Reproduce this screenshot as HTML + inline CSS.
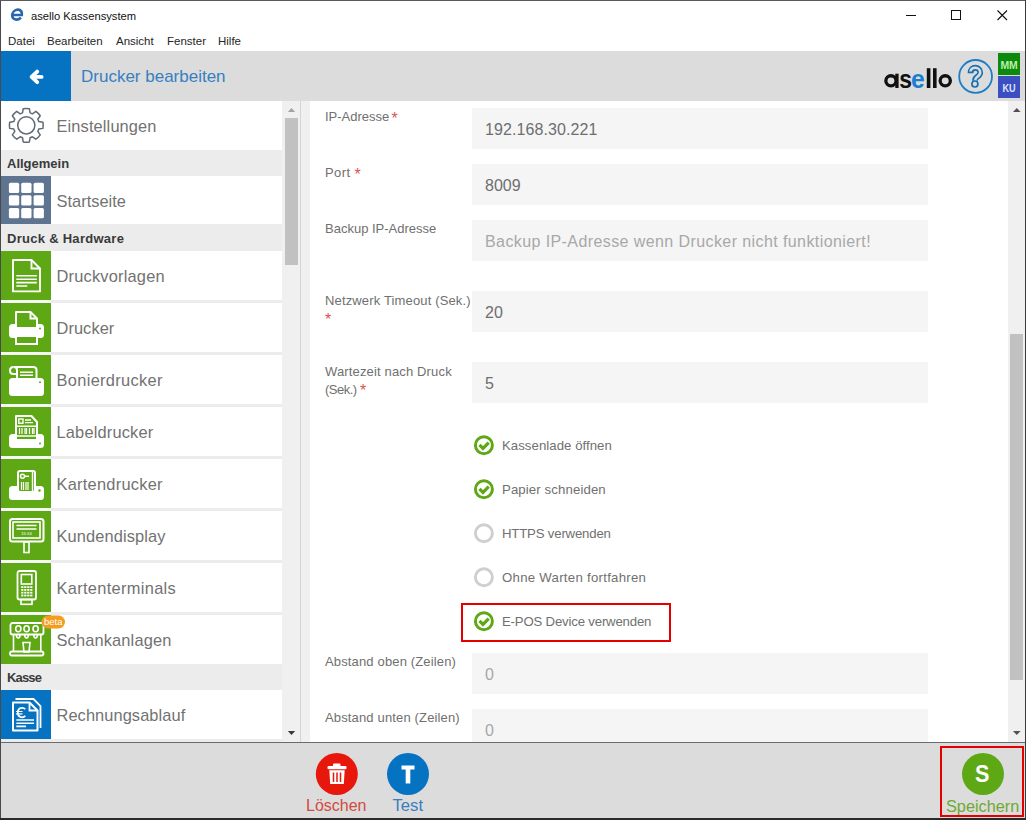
<!DOCTYPE html>
<html><head><meta charset="utf-8">
<style>
*{box-sizing:border-box;margin:0;padding:0}
html,body{width:1026px;height:820px;overflow:hidden;background:#fff;font-family:"Liberation Sans",sans-serif}
.a{position:absolute}
.t{position:absolute;white-space:nowrap;line-height:1}
#frameL{left:0;top:0;width:1px;height:820px;background:#4a4a4a}
#frameT{left:0;top:0;width:1026px;height:1px;background:#5a5a5a}
#frameR{left:1025px;top:0;width:1px;height:820px;background:#3a3a3a}
#frameB{left:0;top:818px;width:1026px;height:2px;background:#2a2a2a}
.menu{font-size:11.5px;color:#262626;top:35.7px}
#hdr{left:1px;top:51px;width:1024px;height:50px;background:#dcdcdc}
#back{left:1px;top:51px;width:70px;height:50px;background:#0572c2}
.side-row{position:absolute;left:1px;width:281px;height:49px;background:#fff}
.ibox{position:absolute;left:0;top:0;width:50px;height:49px}
.green{background:#5ea816}
.lbl{position:absolute;left:56.5px;font-size:16.4px;color:#727272;white-space:nowrap;line-height:1}
.sec{position:absolute;left:1px;width:281px;height:26px;background:#ececec}
.sec span{position:absolute;left:6px;top:7px;font-size:13px;font-weight:bold;color:#3a3a3a;white-space:nowrap;line-height:1}
.flbl{position:absolute;left:325px;font-size:13px;color:#707070;line-height:18px;white-space:nowrap}
.ast{color:#d9534f;font-size:16px;line-height:0;position:relative;top:2.2px}
.inp{position:absolute;left:472px;width:456px;height:41px;background:#f5f5f5}
.inp span{position:absolute;left:13px;top:13.8px;font-size:16px;color:#6e6e6e;line-height:1;white-space:nowrap}
.inp span.ph{color:#a8a8a8}
.cb{position:absolute;left:473px;width:21px;height:21px;border-radius:50%;border:2.5px solid #5ea816}
.cb.off{border-color:#cfcfcf}
.cbl{position:absolute;left:502px;font-size:13.2px;color:#707070;line-height:1;white-space:nowrap}
</style></head><body>
<!-- title bar -->
<div class="a" style="left:1px;top:1px;width:1024px;height:50px;background:#fff"></div>
<svg class="a" style="left:9px;top:6px" width="18" height="18" viewBox="0 0 18 18">
  <path d="M3.4,9 H12.8 C12.9,6 10.9,3.6 8.1,3.6 C5.3,3.6 3.1,5.8 3.1,8.6 C3.1,11.4 5.3,13.6 8.1,13.6 C9.9,13.6 11.3,12.9 12.3,11.6" fill="none" stroke="#2a66ad" stroke-width="2.6" transform="skewX(-8) translate(1.3,0)"/>
</svg>
<div class="t" style="left:31px;top:11px;font-size:11.2px;color:#111">asello Kassensystem</div>
<svg class="a" style="left:900px;top:5px" width="120" height="22">
  <line x1="906" y1="15.5" x2="916" y2="15.5" stroke="#111" stroke-width="1" transform="translate(-900,-5)"/>
  <rect x="51.5" y="5.5" width="9" height="9" fill="none" stroke="#111" stroke-width="1"/>
  <path d="M97.5,5.5 L107,15 M107,5.5 L97.5,15" stroke="#111" stroke-width="1.1"/>
</svg>
<div class="t menu" style="left:8px">Datei</div>
<div class="t menu" style="left:47px">Bearbeiten</div>
<div class="t menu" style="left:116px">Ansicht</div>
<div class="t menu" style="left:167px">Fenster</div>
<div class="t menu" style="left:218px">Hilfe</div>

<!-- header -->
<div id="hdr" class="a"></div>
<div id="back" class="a"></div>
<svg class="a" style="left:20px;top:60px" width="32" height="32" viewBox="20 60 32 32">
  <path d="M37.2,71.6 L31.6,76.9 L37.2,82.2 M32.5,76.9 H41.6" fill="none" stroke="#fff" stroke-width="3.9" stroke-linecap="round" stroke-linejoin="round"/>
</svg>
<div class="t" style="left:81px;top:68px;font-size:17px;color:#3580c0">Drucker bearbeiten</div>

<!-- sidebar -->
<div class="a" style="left:1px;top:101px;width:281px;height:641px;background:#ececec"></div>
<!-- Einstellungen -->
<div class="side-row" style="top:101px;height:49px"></div>
<svg class="a" style="left:0;top:101px" width="52" height="49" viewBox="0 101 52 49">
  <g transform="translate(26.3,125.3)" fill="none" stroke="#606b74" stroke-width="1.5" stroke-linejoin="round">
    <path d="M-3.80,-12.43 L-3.08,-16.62 A16.9,16.9 0 0 1 3.08,-16.62 L3.80,-12.43 A13.0,13.0 0 0 1 6.10,-11.48 L9.57,-13.93 A16.9,16.9 0 0 1 13.93,-9.57 L11.48,-6.10 A13.0,13.0 0 0 1 12.43,-3.80 L16.62,-3.08 A16.9,16.9 0 0 1 16.62,3.08 L12.43,3.80 A13.0,13.0 0 0 1 11.48,6.10 L13.93,9.57 A16.9,16.9 0 0 1 9.57,13.93 L6.10,11.48 A13.0,13.0 0 0 1 3.80,12.43 L3.08,16.62 A16.9,16.9 0 0 1 -3.08,16.62 L-3.80,12.43 A13.0,13.0 0 0 1 -6.10,11.48 L-9.57,13.93 A16.9,16.9 0 0 1 -13.93,9.57 L-11.48,6.10 A13.0,13.0 0 0 1 -12.43,3.80 L-16.62,3.08 A16.9,16.9 0 0 1 -16.62,-3.08 L-12.43,-3.80 A13.0,13.0 0 0 1 -11.48,-6.10 L-13.93,-9.57 A16.9,16.9 0 0 1 -9.57,-13.93 L-6.10,-11.48 A13.0,13.0 0 0 1 -3.80,-12.43 Z"/>
    <circle r="8.6"/>
  </g>
</svg>
<div class="lbl" style="top:118px;letter-spacing:0.13px">Einstellungen</div>
<div class="sec" style="top:150px"><span>Allgemein</span></div>
<!-- Startseite -->
<div class="side-row" style="top:176px;height:48px"></div>
<div class="a" style="left:1px;top:176px;width:50px;height:48px;background:#5e7491"></div>
<svg class="a" style="left:0;top:176px" width="52" height="48" viewBox="0 176 52 48" fill="#fff">
  <rect x="8.9" y="182.7" width="10.3" height="10.3" rx="1.5"/><rect x="21.2" y="182.7" width="10.3" height="10.3" rx="1.5"/><rect x="33.6" y="182.7" width="10.3" height="10.3" rx="1.5"/>
  <rect x="8.9" y="195.3" width="10.3" height="10.3" rx="1.5"/><rect x="21.2" y="195.3" width="10.3" height="10.3" rx="1.5"/><rect x="33.6" y="195.3" width="10.3" height="10.3" rx="1.5"/>
  <rect x="8.9" y="207.9" width="10.3" height="10.3" rx="1.5"/><rect x="21.2" y="207.9" width="10.3" height="10.3" rx="1.5"/><rect x="33.6" y="207.9" width="10.3" height="10.3" rx="1.5"/>
</svg>
<div class="lbl" style="top:192.5px;letter-spacing:0.02px">Startseite</div>
<div class="sec" style="top:224px;height:27px"><span style="top:8px;letter-spacing:0.28px">Druck &amp; Hardware</span></div>

<!-- Druckvorlagen 251 -->
<div class="side-row" style="top:251px"></div>
<div class="a green" style="left:1px;top:251px;width:50px;height:49px"></div>
<svg class="a" style="left:0;top:251px" width="52" height="49" viewBox="0 0 52 49" fill="none" stroke="#fff" stroke-width="2">
  <path d="M13,9 H31.5 L40,17.5 V40.4 H13 Z" stroke-linejoin="round" stroke-width="1.9"/>
  <path d="M31.5,9 V17.5 H40" stroke-width="1.9"/>
  <path d="M16.3,24.8 H36.8 M16.3,28.2 H36.8 M16.3,31.6 H36.8 M16.3,35 H27.3" stroke-width="1.6"/>
</svg>
<div class="lbl" style="top:267.5px;letter-spacing:0.2px">Druckvorlagen</div>

<!-- Drucker 303 -->
<div class="side-row" style="top:303px"></div>
<div class="a green" style="left:1px;top:303px;width:50px;height:49px"></div>
<svg class="a" style="left:0;top:303px" width="52" height="49" viewBox="0 0 52 49">
  <rect x="9" y="21" width="35" height="14" rx="3.5" fill="#fff"/>
  <path d="M16,9 H30.5 L37,15.5 V25 H16 Z" fill="#5ea816" stroke="#fff" stroke-width="2" stroke-linejoin="round"/>
  <path d="M30.5,9 V15.5 H37" fill="none" stroke="#fff" stroke-width="2"/>
  <rect x="16" y="33" width="21" height="8" fill="#5ea816" stroke="#fff" stroke-width="2"/>
  <circle cx="40" cy="25.6" r="1" fill="#5ea816"/>
</svg>
<div class="lbl" style="top:319.5px;letter-spacing:0.07px">Drucker</div>

<!-- Bonierdrucker 355 -->
<div class="side-row" style="top:355px"></div>
<div class="a green" style="left:1px;top:355px;width:50px;height:49px"></div>
<svg class="a" style="left:0;top:355px" width="52" height="49" viewBox="0 0 52 49">
  <rect x="9" y="23" width="35" height="18" rx="3.5" fill="#fff"/>
  <path d="M17,24 V15 C17,12.5 15.5,12 13.5,12 H33 C35,12 36.5,13 36.5,15 V24" fill="none" stroke="#fff" stroke-width="2"/>
  <path d="M13.5,12 C11,12 10,13.5 10,15.5 C10,18 11.5,19 13.5,19 H17" fill="none" stroke="#fff" stroke-width="2"/>
  <path d="M20,17.2 H33 M20,20.2 H33" stroke="#fff" stroke-width="1.6"/>
  <circle cx="40" cy="27.3" r="1" fill="#5ea816"/>
</svg>
<div class="lbl" style="top:371.5px;letter-spacing:0.33px">Bonierdrucker</div>

<!-- Labeldrucker 407 -->
<div class="side-row" style="top:407px"></div>
<div class="a green" style="left:1px;top:407px;width:50px;height:49px"></div>
<svg class="a" style="left:0;top:407px" width="52" height="49" viewBox="0 0 52 49">
  <rect x="9" y="27" width="35" height="14" rx="3.5" fill="#fff"/>
  <path d="M16,9 H31.5 L37,15 V33 H16 Z" fill="#5ea816" stroke="#fff" stroke-width="2" stroke-linejoin="round"/>
  <rect x="18.8" y="12" width="4.2" height="4.2" fill="none" stroke="#fff" stroke-width="1.4"/>
  <path d="M25,13 H31 M25,15.6 H33" stroke="#fff" stroke-width="1.3"/>
  <path d="M17,19.3 H36 M17,29 H36" stroke="#fff" stroke-width="1.5"/>
  <path d="M19.5,21 V27 M22,21 V27 M25,21 V27 M26.5,21 V27 M29.5,21 V27 M32.5,21 V27 M34,21 V27" stroke="#fff" stroke-width="1.2"/>
  <circle cx="40" cy="36.5" r="1" fill="#5ea816"/>
</svg>
<div class="lbl" style="top:423.5px;letter-spacing:0.18px">Labeldrucker</div>

<!-- Kartendrucker 459 -->
<div class="side-row" style="top:459px"></div>
<div class="a green" style="left:1px;top:459px;width:50px;height:49px"></div>
<svg class="a" style="left:0;top:459px" width="52" height="49" viewBox="0 0 52 49">
  <rect x="9" y="27" width="35" height="14" rx="3.5" fill="#fff"/>
  <rect x="18" y="12" width="17" height="21" rx="2" fill="#5ea816" stroke="#fff" stroke-width="2"/>
  <path d="M32.5,13 V32" stroke="#fff" stroke-width="1.4"/>
  <circle cx="22.5" cy="17.3" r="2" fill="none" stroke="#fff" stroke-width="1.5"/>
  <path d="M24.5,17.3 H29" stroke="#fff" stroke-width="1.5"/>
  <path d="M21.5,23 V31 M23.5,23 V31 M26,23 V31 M28,23 V31" stroke="#fff" stroke-width="1.2"/>
  <circle cx="39.5" cy="31.5" r="1.2" fill="#5ea816"/>
</svg>
<div class="lbl" style="top:475.5px;letter-spacing:0.26px">Kartendrucker</div>

<!-- Kundendisplay 511 -->
<div class="side-row" style="top:511px"></div>
<div class="a green" style="left:1px;top:511px;width:50px;height:49px"></div>
<svg class="a" style="left:0;top:511px" width="52" height="49" viewBox="0 0 52 49">
  <rect x="10" y="8" width="33.5" height="22.5" rx="2.5" fill="none" stroke="#fff" stroke-width="2"/>
  <rect x="13" y="11" width="27" height="16" fill="none" stroke="#fff" stroke-width="1.6"/>
  <path d="M16.5,14.5 H36.5 M16.5,18 H36.5" stroke="#fff" stroke-width="1.3"/>
  <text x="26.5" y="23.8" font-family="Liberation Sans" font-size="4.2" fill="#fff" text-anchor="middle">15:34</text>
  <rect x="24" y="31" width="5" height="10.5" fill="none" stroke="#fff" stroke-width="1.6"/>
</svg>
<div class="lbl" style="top:527.5px;letter-spacing:0.12px">Kundendisplay</div>

<!-- Kartenterminals 563 -->
<div class="side-row" style="top:563px"></div>
<div class="a green" style="left:1px;top:563px;width:50px;height:49px"></div>
<svg class="a" style="left:0;top:563px" width="52" height="49" viewBox="0 0 52 49">
  <rect x="17.5" y="8" width="18.5" height="28.5" rx="2" fill="none" stroke="#fff" stroke-width="1.8"/>
  <rect x="21.3" y="11.5" width="10.5" height="9.5" fill="none" stroke="#fff" stroke-width="1.6"/>
  <rect x="21" y="36.5" width="11" height="4.8" fill="none" stroke="#fff" stroke-width="1.6"/>
  <g fill="#fff">
    <rect x="21.2" y="23.2" width="2.2" height="1.8"/><rect x="24.2" y="23.2" width="2.2" height="1.8"/><rect x="27.2" y="23.2" width="2.2" height="1.8"/><rect x="30.2" y="23.2" width="2.2" height="1.8"/>
    <rect x="21.2" y="26" width="2.2" height="1.8"/><rect x="24.2" y="26" width="2.2" height="1.8"/><rect x="27.2" y="26" width="2.2" height="1.8"/><rect x="30.2" y="26" width="2.2" height="1.8"/>
    <rect x="21.2" y="28.8" width="2.2" height="1.8"/><rect x="24.2" y="28.8" width="2.2" height="1.8"/><rect x="27.2" y="28.8" width="2.2" height="1.8"/><rect x="30.2" y="28.8" width="2.2" height="1.8"/>
    <rect x="21.2" y="31.6" width="2.2" height="1.8"/><rect x="24.2" y="31.6" width="2.2" height="1.8"/><rect x="27.2" y="31.6" width="2.2" height="1.8"/><rect x="30.2" y="31.6" width="2.2" height="1.8"/>
  </g>
</svg>
<div class="lbl" style="top:579.5px;letter-spacing:0.32px">Kartenterminals</div>

<!-- Schankanlagen 615 -->
<div class="side-row" style="top:615px"></div>
<div class="a green" style="left:1px;top:615px;width:50px;height:49px"></div>
<svg class="a" style="left:0;top:615px" width="70" height="49" viewBox="0 0 70 49">
  <rect x="10.5" y="8" width="33" height="11.5" rx="2" fill="none" stroke="#fff" stroke-width="1.8"/>
  <g fill="none" stroke="#fff" stroke-width="1.6">
    <ellipse cx="18.3" cy="13.8" rx="2.6" ry="3"/><ellipse cx="26.6" cy="13.8" rx="2.6" ry="3"/><ellipse cx="35.6" cy="13.8" rx="2.6" ry="3"/>
    <path d="M13.5,19.5 V36.5 M40.8,19.5 V36.5"/>
    <path d="M16.5,20 C16.5,24 20,24 20,20 M24.8,20 C24.8,24 28.3,24 28.3,20 M33.8,20 C33.8,24 37.3,24 37.3,20"/>
    <path d="M23,27.5 H30 L29,37 H24 Z"/>
  </g>
  <rect x="10" y="36.5" width="33.5" height="4" rx="2" fill="none" stroke="#fff" stroke-width="1.8"/>
  <rect x="41.5" y="0.5" width="23.5" height="13" rx="6.5" fill="#f39c1e"/>
  <text x="53.2" y="10.3" font-family="Liberation Sans" font-size="9.5" fill="#fff" text-anchor="middle">beta</text>
</svg>
<div class="lbl" style="top:631.5px;letter-spacing:0.15px">Schankanlagen</div>
<div class="sec" style="top:664px"><span style="letter-spacing:-0.85px">Kasse</span></div>

<!-- Rechnungsablauf 690 -->
<div class="side-row" style="top:690px"></div>
<div class="a" style="left:1px;top:690px;width:50px;height:49px;background:#0572c2"></div>
<svg class="a" style="left:0;top:690px" width="52" height="49" viewBox="0 0 52 49" fill="none" stroke="#fff">
  <path d="M15.5,9 H33.5 L40.5,16 V38" stroke-width="1.8"/>
  <path d="M13,12.5 H29.5 L37.5,20.5 V40.5 H13 Z" stroke-width="2" stroke-linejoin="round"/>
  <path d="M29.5,12.5 V20.5 H37.5" stroke-width="1.8"/>
  <path d="M25.3,19.3 C24.5,18.3 23.5,17.8 22.2,17.8 C19.3,17.8 17.8,20 17.8,22.6 C17.8,25.3 19.3,27.3 22.2,27.3 C23.5,27.3 24.5,26.8 25.3,25.8" stroke-width="1.8"/>
  <path d="M16,21.5 H22.5 M16,23.8 H22.5" stroke-width="1.2"/>
  <path d="M16.3,30 H34 M16.3,33.2 H34 M16.3,36.4 H26" stroke-width="1.6"/>
</svg>
<div class="lbl" style="top:706.5px;letter-spacing:0.08px">Rechnungsablauf</div>



<div class="a" style="left:1px;top:300px;width:50px;height:3px;background:#f6f6f6"></div><div class="a" style="left:1px;top:352px;width:50px;height:3px;background:#f6f6f6"></div><div class="a" style="left:1px;top:404px;width:50px;height:3px;background:#f6f6f6"></div><div class="a" style="left:1px;top:456px;width:50px;height:3px;background:#f6f6f6"></div><div class="a" style="left:1px;top:508px;width:50px;height:3px;background:#f6f6f6"></div><div class="a" style="left:1px;top:560px;width:50px;height:3px;background:#f6f6f6"></div><div class="a" style="left:1px;top:612px;width:50px;height:3px;background:#f6f6f6"></div>
<!-- sidebar scrollbar -->
<div class="a" style="left:282px;top:101px;width:18px;height:641px;background:#f0f0f0"></div>
<div class="a" style="left:285px;top:118px;width:13px;height:147px;background:#c1c1c1"></div>
<div class="a" style="left:300px;top:101px;width:1px;height:641px;background:#d4d4d4"></div>
<!-- sidebar scroll arrows -->
<svg class="a" style="left:282px;top:101px" width="18" height="641">
  <path d="M5.8,11 L9.5,7 L13.2,11 Z" fill="#a3a3a3"/>
  <path d="M5.8,630 L9.5,634 L13.2,630 Z" fill="#3a3a3a"/>
</svg>

<!-- content -->
<div class="a" style="left:301px;top:101px;width:9px;height:641px;background:#f0f0f0"></div>
<div class="a" style="left:310px;top:101px;width:698px;height:641px;background:#fff"></div>
<div class="flbl" style="top:108.4px">IP-Adresse <span class="ast" style="margin-left:-1.5px">*</span></div>
<div class="inp" style="top:108px"><span style="letter-spacing:0.1px">192.168.30.221</span></div>
<div class="flbl" style="top:164.4px;letter-spacing:0.4px">Port <span class="ast">*</span></div>
<div class="inp" style="top:164px"><span>8009</span></div>
<div class="flbl" style="top:220.4px">Backup IP-Adresse</div>
<div class="inp" style="top:220px"><span class="ph" style="letter-spacing:0.41px">Backup IP-Adresse wenn Drucker nicht funktioniert!</span></div>
<div class="flbl" style="top:292.1px;letter-spacing:0.15px">Netzwerk Timeout (Sek.)<br><span class="ast">*</span></div>
<div class="inp" style="top:291px"><span>20</span></div>
<div class="flbl" style="top:362.7px;letter-spacing:0.15px">Wartezeit nach Druck<br><span style="letter-spacing:-0.5px">(Sek.)</span> <span class="ast" style="margin-left:-0.5px">*</span></div>
<div class="inp" style="top:362px"><span>5</span></div>

<svg class="a" style="left:460px;top:420px" width="220" height="230" viewBox="460 420 220 230">
  <g fill="none" stroke-width="3">
    <circle cx="483.9" cy="445.2" r="8.5" stroke="#5ea816"/>
    <path d="M479.5,444.8 L483,448.3 L488.7,442.6" stroke="#5ea816" stroke-width="3.3"/>
    <circle cx="483.9" cy="489.2" r="8.5" stroke="#5ea816"/>
    <path d="M479.5,488.8 L483,492.3 L488.7,486.6" stroke="#5ea816" stroke-width="3.3"/>
    <circle cx="483.9" cy="533.2" r="8.5" stroke="#cfcfcf"/>
    <circle cx="483.9" cy="577.2" r="8.5" stroke="#cfcfcf"/>
    <circle cx="483.9" cy="621.2" r="8.5" stroke="#5ea816"/>
    <path d="M479.5,620.8 L483,624.3 L488.7,618.6" stroke="#5ea816" stroke-width="3.3"/>
  </g>
  <rect x="462" y="604" width="208" height="37" fill="none" stroke="#e50000" stroke-width="2"/>
</svg>
<div class="cbl" style="top:439.1px;letter-spacing:0.05px">Kassenlade öffnen</div>
<div class="cbl" style="top:483.1px;letter-spacing:0.12px">Papier schneiden</div>
<div class="cbl" style="top:527.1px;letter-spacing:-0.18px">HTTPS verwenden</div>
<div class="cbl" style="top:571.1px;letter-spacing:0.28px">Ohne Warten fortfahren</div>
<div class="cbl" style="top:615.1px;letter-spacing:-0.18px">E-POS Device verwenden</div>

<div class="flbl" style="top:653.1px;letter-spacing:0.15px">Abstand oben (Zeilen)</div>
<div class="inp" style="top:653px"><span class="ph">0</span></div>
<div class="flbl" style="top:709.1px;letter-spacing:0.15px">Abstand unten (Zeilen)</div>
<div class="inp" style="top:709px"><span class="ph">0</span></div>


<!-- content scrollbar -->
<div class="a" style="left:1008px;top:101px;width:17px;height:641px;background:#f0f0f0"></div>
<div class="a" style="left:1010px;top:334px;width:13px;height:346px;background:#c1c1c1"></div>

<svg class="a" style="left:870px;top:51px" width="155" height="50" viewBox="870 51 155 50">
  <g fill="none" stroke="#111" stroke-width="3.3">
    <circle cx="890.95" cy="80.85" r="5.1"/>
    <circle cx="945.25" cy="80.85" r="5.1"/>
  </g>
  <g fill="#111">
    <rect x="895.3" y="73.7" width="3.3" height="14.3"/>
    <rect x="926.8" y="68.2" width="3.6" height="19.8"/>
    <rect x="933" y="68.2" width="3.6" height="19.8"/>
  </g>
  <text x="0" y="0" font-family="Liberation Sans" font-weight="bold" font-size="26" fill="#111" transform="translate(899.3,88) scale(0.88,1)">s</text>
  <text x="0" y="0" font-family="Liberation Sans" font-weight="bold" font-size="26" fill="#1a7fd0" transform="translate(911,88) scale(0.95,1)">e</text>
  <circle cx="975.6" cy="76.4" r="16.4" fill="none" stroke="#1d7ec6" stroke-width="1.8"/>
  <path d="M970.5,73.2 C970.5,69.5 972.7,67.75 975.35,67.75 C978,67.75 980.2,69.8 980.2,72.4 C980.2,74.8 978.5,76 976.8,77.2 C975.5,78.1 975,79 975,80.8" fill="none" stroke="#1a6fb0" stroke-width="5.8"/>
  <path d="M970.5,71.6 C970.5,69.5 972.7,67.75 975.35,67.75 C978,67.75 980.2,69.8 980.2,72.4 C980.2,74.8 978.5,76 976.8,77.2 C975.5,78.1 975,79 975,81.5" fill="none" stroke="#d8dde2" stroke-width="2.6"/>
  <circle cx="974.9" cy="84" r="3" fill="#d8dde2" stroke="#1a6fb0" stroke-width="1.7"/>
  <rect x="998" y="53" width="22" height="22" fill="#0b8a0b"/>
  <rect x="998" y="76" width="22" height="22" fill="#3b4fc0"/>
  <text x="1000.4" y="69.2" font-family="Liberation Sans" font-weight="bold" font-size="10.4" fill="#b8f0a8" textLength="17.4" lengthAdjust="spacingAndGlyphs">MM</text>
  <text x="1002.4" y="92.2" font-family="Liberation Sans" font-weight="bold" font-size="10.4" fill="#dfe3ff" textLength="13.2" lengthAdjust="spacingAndGlyphs">KU</text>
</svg>
<svg class="a" style="left:1008px;top:101px" width="17" height="641">
  <path d="M5,11 L8.8,7 L12.6,11 Z" fill="#505050"/>
  <path d="M5,630 L8.8,634 L12.6,630 Z" fill="#505050"/>
</svg>

<!-- bottom bar -->
<div class="a" style="left:1px;top:742px;width:1024px;height:1px;background:#686c70"></div>
<div class="a" style="left:1px;top:743px;width:1024px;height:75px;background:#dcdcdc"></div>
<svg class="a" style="left:0;top:742px" width="1026" height="78" viewBox="0 742 1026 78">
  <circle cx="336.8" cy="774" r="21" fill="#e8170c"/>
  <circle cx="408" cy="774" r="21" fill="#0572c2"/>
  <circle cx="983" cy="774" r="21" fill="#5ea816"/>
  <!-- trash -->
  <g fill="#fff">
    <rect x="333" y="763.5" width="7.5" height="3" rx="1"/>
    <rect x="327.5" y="766" width="19" height="3.2" rx="1"/>
    <path d="M329.3,770.2 H344.7 L343.8,784 H330.2 Z"/>
  </g>
  <path d="M333.5,772.5 V782 M337,772.5 V782 M340.5,772.5 V782" stroke="#e8170c" stroke-width="1.5"/>
  <path d="M401.5,765.5 H414.5 V769.5 H410.3 V783.5 H405.7 V769.5 H401.5 Z" fill="#fff"/>
  <rect x="941" y="747" width="82" height="69" fill="none" stroke="#e50000" stroke-width="2"/>
</svg>
<div class="t" style="left:975.2px;top:762.2px;font-size:24px;font-weight:bold;color:#fff;transform:scaleX(0.9);transform-origin:0 0">S</div>
<div class="t" style="left:306px;top:798.2px;font-size:16px;color:#d24a40">Löschen</div>
<div class="t" style="left:392.5px;top:798.2px;font-size:16.7px;color:#3a7dc0">Test</div>
<div class="t" style="left:946px;top:798.2px;font-size:16.3px;color:#6eaa30">Speichern</div>


<div id="frameL" class="a"></div>
<div id="frameT" class="a"></div>
<div id="frameR" class="a"></div>
<div id="frameB" class="a"></div>
</body></html>
